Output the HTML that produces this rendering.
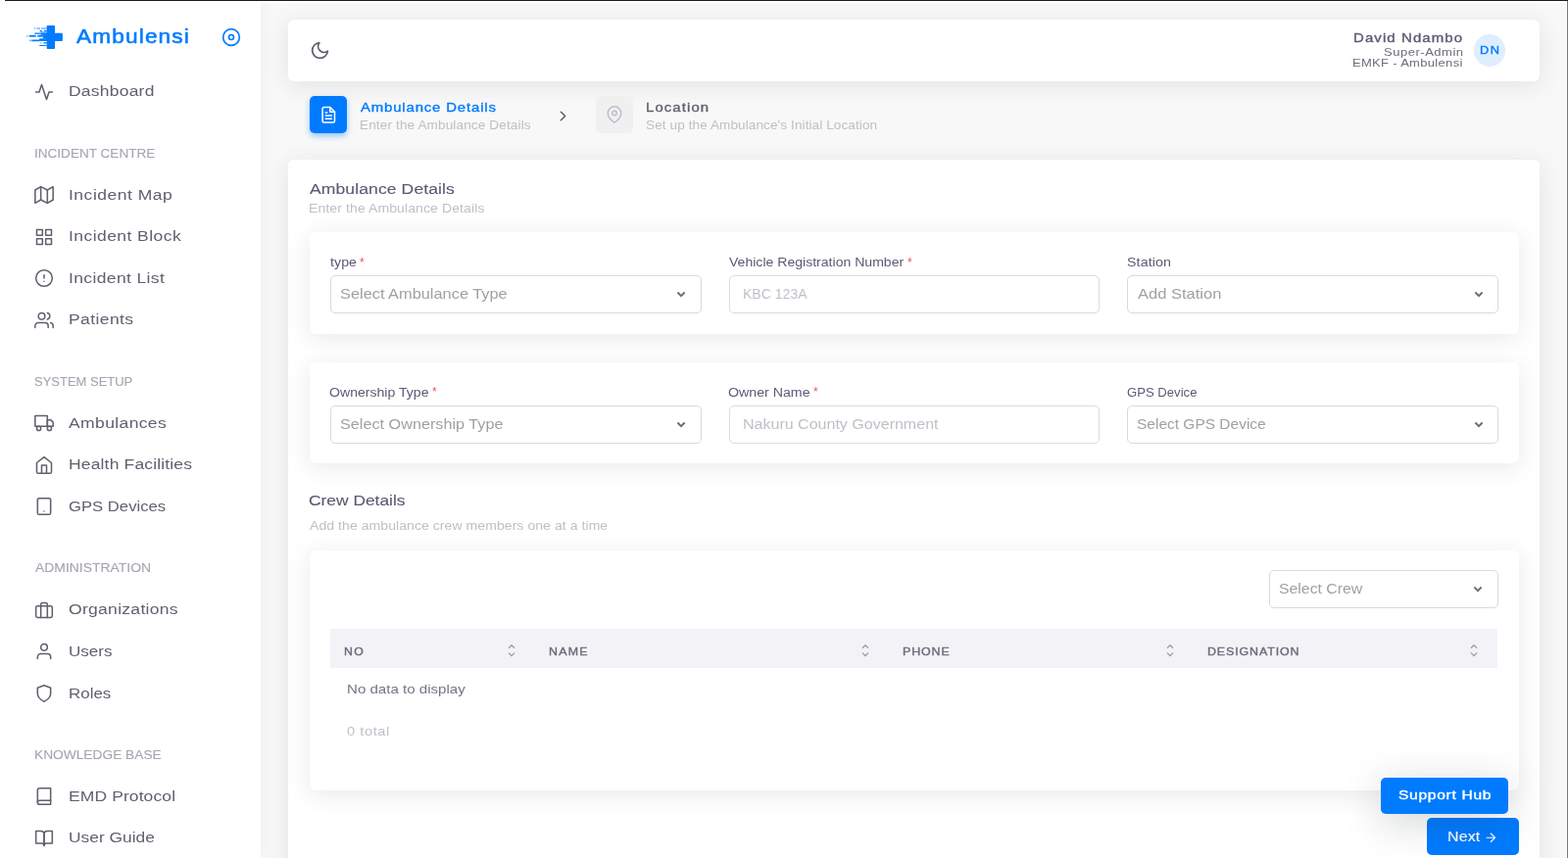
<!DOCTYPE html>
<html lang="en"><head><meta charset="utf-8"><title>Ambulensi - Add Ambulance</title>
<style>
html,body{margin:0;padding:0;background:#f8f8f8}
body{width:1600px;height:876px;overflow:hidden;background:#f8f8f8;position:relative;
 font-family:"Liberation Sans",sans-serif;}
aside,nav,header,main,section,.stepper-header{display:block;position:static;margin:0;padding:0}
.abs{position:absolute}
.t{position:absolute;white-space:nowrap;line-height:1;display:block;transform-origin:0 50%;will-change:transform}
.ic{position:absolute;display:block;overflow:visible}
</style></head>
<body>
<aside class="sidebar"><nav>
<div class="abs" style="left:0;top:0;width:266px;height:876px;background:#fff;box-shadow:0 0 15px 0 rgba(34,41,47,.05)"></div>
<svg class="ic" style="left:26px;top:25px" width="39" height="26" viewBox="26 25 39 26">
<g fill="#007bff">
<rect x="47.68" y="25.96" width="8.34" height="24.04" rx=".9"/>
<rect x="47" y="33.76" width="16.9" height="8.22" rx=".9"/>
<rect x="41.7" y="33.76" width="6.3" height="2.1"/>
<rect x="43.8" y="35.8" width="4.2" height="3.6"/>
<rect x="40.1" y="39.3" width="7.9" height="2.68"/>
<g opacity=".5"><rect x="34.94" y="28.22" width="1.23" height="1.64"/><rect x="37.41" y="28.22" width="3.5" height="1.64"/><rect x="41.93" y="28.22" width="5.8" height="1.64"/></g>
<rect x="40.49" y="30.89" width="2.46" height="1.23"/><rect x="45" y="30.89" width="2.7" height="1.23"/>
<rect x="41.3" y="32.33" width="6.4" height="1.5" opacity=".7"/>
<rect x="35.15" y="33.5" width="6.6" height="1.3" rx=".5"/>
<rect x="27.14" y="35.82" width="1.43" height="1.85" opacity=".5"/><rect x="29.81" y="35.82" width="6.98" height="1.85"/><rect x="38.23" y="35.82" width="5.6" height="1.85"/>
<rect x="30" y="40.54" width="2.7" height="1.65" opacity=".5"/><rect x="32.68" y="40.54" width="7.5" height="1.65"/>
<rect x="41.31" y="43" width="1.23" height="1.65" opacity=".5"/><rect x="44.39" y="43" width="3.3" height="1.65" opacity=".85"/>
<rect x="40.08" y="45.88" width="7.62" height="1.24" rx=".5"/>
</g></svg>
<span class="t" id="t1" style="left:78.32px;top:27.66px;font-size:19.90px;color:#007bff;letter-spacing:0.985px;transform:scaleX(1.1400);-webkit-text-stroke:0.52px #007bff;">Ambulensi</span>
<svg class="ic" style="left:226.10px;top:27.75px;" width="20.00" height="20.00" viewBox="0 0 24 24" fill="none" stroke="#007bff" stroke-width="2" stroke-linecap="round" stroke-linejoin="round"><circle cx="12" cy="12" r="10"/><circle cx="12" cy="12" r="3"/></svg>
<svg class="ic" style="left:34.85px;top:83.70px;" width="20.00" height="20.00" viewBox="0 0 24 24" fill="none" stroke="#625f6e" stroke-width="1.85" stroke-linecap="round" stroke-linejoin="round"><polyline points="22 12 18 12 15 21 9 3 6 12 2 12"/></svg>
<span class="t" id="t2" style="left:70.14px;top:85.26px;font-size:15.40px;color:#625f6e;letter-spacing:0.193px;transform:scaleX(1.1371);">Dashboard</span>
<span class="t" id="t3" style="left:35.08px;top:150.63px;font-size:12.60px;color:#a6a4b0;transform:scaleX(1.0767);-webkit-text-stroke:0.10px #a6a4b0;">INCIDENT CENTRE</span>
<svg class="ic" style="left:34.85px;top:189.40px;" width="20.00" height="20.00" viewBox="0 0 24 24" fill="none" stroke="#625f6e" stroke-width="1.85" stroke-linecap="round" stroke-linejoin="round"><polygon points="1 6 1 22 8 18 16 22 23 18 23 2 16 6 8 2 1 6"/><line x1="8" y1="2" x2="8" y2="18"/><line x1="16" y1="6" x2="16" y2="22"/></svg>
<span class="t" id="t4" style="left:69.58px;top:190.96px;font-size:15.40px;color:#625f6e;letter-spacing:0.439px;transform:scaleX(1.1390);">Incident Map</span>
<svg class="ic" style="left:34.85px;top:231.90px;" width="20.00" height="20.00" viewBox="0 0 24 24" fill="none" stroke="#625f6e" stroke-width="1.85" stroke-linecap="round" stroke-linejoin="round"><rect x="3" y="3" width="7" height="7"/><rect x="14" y="3" width="7" height="7"/><rect x="14" y="14" width="7" height="7"/><rect x="3" y="14" width="7" height="7"/></svg>
<span class="t" id="t5" style="left:69.65px;top:233.46px;font-size:15.40px;color:#625f6e;letter-spacing:0.381px;transform:scaleX(1.1381);">Incident Block</span>
<svg class="ic" style="left:34.85px;top:274.40px;" width="20.00" height="20.00" viewBox="0 0 24 24" fill="none" stroke="#625f6e" stroke-width="1.85" stroke-linecap="round" stroke-linejoin="round"><circle cx="12" cy="12" r="10"/><line x1="12" y1="8" x2="12" y2="12"/><line x1="12" y1="16" x2="12.01" y2="16"/></svg>
<span class="t" id="t6" style="left:69.52px;top:275.96px;font-size:15.40px;color:#625f6e;letter-spacing:0.316px;transform:scaleX(1.1390);">Incident List</span>
<svg class="ic" style="left:34.85px;top:316.90px;" width="20.00" height="20.00" viewBox="0 0 24 24" fill="none" stroke="#625f6e" stroke-width="1.85" stroke-linecap="round" stroke-linejoin="round"><path d="M17 21v-2a4 4 0 0 0-4-4H5a4 4 0 0 0-4 4v2"/><circle cx="9" cy="7" r="4"/><path d="M23 21v-2a4 4 0 0 0-3-3.87"/><path d="M16 3.13a4 4 0 0 1 0 7.75"/></svg>
<span class="t" id="t7" style="left:69.70px;top:318.46px;font-size:15.40px;color:#625f6e;letter-spacing:0.354px;transform:scaleX(1.1376);">Patients</span>
<span class="t" id="t8" style="left:34.86px;top:384.03px;font-size:12.60px;color:#a6a4b0;transform:scaleX(1.0308);-webkit-text-stroke:0.10px #a6a4b0;">SYSTEM SETUP</span>
<svg class="ic" style="left:34.85px;top:422.00px;" width="20.00" height="20.00" viewBox="0 0 24 24" fill="none" stroke="#625f6e" stroke-width="1.85" stroke-linecap="round" stroke-linejoin="round"><rect x="1" y="3" width="15" height="13"/><polygon points="16 8 20 8 23 11 23 16 16 16 16 8"/><circle cx="5.5" cy="18.5" r="2.5"/><circle cx="18.5" cy="18.5" r="2.5"/></svg>
<span class="t" id="t9" style="left:69.76px;top:423.56px;font-size:15.40px;color:#625f6e;letter-spacing:0.313px;transform:scaleX(1.1400);">Ambulances</span>
<svg class="ic" style="left:34.85px;top:464.50px;" width="20.00" height="20.00" viewBox="0 0 24 24" fill="none" stroke="#625f6e" stroke-width="1.85" stroke-linecap="round" stroke-linejoin="round"><path d="M3 9l9-7 9 7v11a2 2 0 0 1-2 2H5a2 2 0 0 1-2-2z"/><polyline points="9 22 9 12 15 12 15 22"/></svg>
<span class="t" id="t10" style="left:69.92px;top:466.06px;font-size:15.40px;color:#625f6e;letter-spacing:0.127px;transform:scaleX(1.1385);">Health Facilities</span>
<svg class="ic" style="left:34.85px;top:507.10px;" width="20.00" height="20.00" viewBox="0 0 24 24" fill="none" stroke="#625f6e" stroke-width="1.85" stroke-linecap="round" stroke-linejoin="round"><rect x="4" y="2" width="16" height="20" rx="2" ry="2"/><line x1="12" y1="18" x2="12.01" y2="18"/></svg>
<span class="t" id="t11" style="left:69.97px;top:508.66px;font-size:15.40px;color:#625f6e;transform:scaleX(1.0830);">GPS Devices</span>
<span class="t" id="t12" style="left:35.79px;top:573.53px;font-size:12.60px;color:#a6a4b0;transform:scaleX(1.1051);-webkit-text-stroke:0.10px #a6a4b0;">ADMINISTRATION</span>
<svg class="ic" style="left:34.85px;top:612.70px;" width="20.00" height="20.00" viewBox="0 0 24 24" fill="none" stroke="#625f6e" stroke-width="1.85" stroke-linecap="round" stroke-linejoin="round"><rect x="2" y="7" width="20" height="14" rx="2" ry="2"/><path d="M16 21V5a2 2 0 0 0-2-2h-4a2 2 0 0 0-2 2v16"/></svg>
<span class="t" id="t13" style="left:69.83px;top:614.26px;font-size:15.40px;color:#625f6e;letter-spacing:0.242px;transform:scaleX(1.1400);">Organizations</span>
<svg class="ic" style="left:34.85px;top:655.40px;" width="20.00" height="20.00" viewBox="0 0 24 24" fill="none" stroke="#625f6e" stroke-width="1.85" stroke-linecap="round" stroke-linejoin="round"><path d="M20 21v-2a4 4 0 0 0-4-4H8a4 4 0 0 0-4 4v2"/><circle cx="12" cy="7" r="4"/></svg>
<span class="t" id="t14" style="left:70.23px;top:656.96px;font-size:15.40px;color:#625f6e;transform:scaleX(1.1083);">Users</span>
<svg class="ic" style="left:34.85px;top:698.00px;" width="20.00" height="20.00" viewBox="0 0 24 24" fill="none" stroke="#625f6e" stroke-width="1.85" stroke-linecap="round" stroke-linejoin="round"><path d="M12 22s8-4 8-10V5l-8-3-8 3v7c0 6 8 10 8 10z"/></svg>
<span class="t" id="t15" style="left:69.58px;top:699.56px;font-size:15.40px;color:#625f6e;transform:scaleX(1.1012);">Roles</span>
<span class="t" id="t16" style="left:34.67px;top:765.20px;font-size:12.60px;color:#a6a4b0;transform:scaleX(1.0908);-webkit-text-stroke:0.10px #a6a4b0;">KNOWLEDGE BASE</span>
<svg class="ic" style="left:34.85px;top:803.20px;" width="20.00" height="20.00" viewBox="0 0 24 24" fill="none" stroke="#625f6e" stroke-width="1.85" stroke-linecap="round" stroke-linejoin="round"><path d="M4 19.5A2.5 2.5 0 0 1 6.5 17H20"/><path d="M6.5 2H20v20H6.5A2.5 2.5 0 0 1 4 19.5v-15A2.5 2.5 0 0 1 6.5 2z"/></svg>
<span class="t" id="t17" style="left:70.01px;top:804.76px;font-size:15.40px;color:#625f6e;letter-spacing:0.071px;transform:scaleX(1.1390);">EMD Protocol</span>
<svg class="ic" style="left:34.85px;top:845.50px;" width="20.00" height="20.00" viewBox="0 0 24 24" fill="none" stroke="#625f6e" stroke-width="1.85" stroke-linecap="round" stroke-linejoin="round"><path d="M2 3h6a4 4 0 0 1 4 4v14a3 3 0 0 0-3-3H2z"/><path d="M22 3h-6a4 4 0 0 0-4 4v14a3 3 0 0 1 3-3h7z"/></svg>
<span class="t" id="t18" style="left:70.41px;top:847.06px;font-size:15.40px;color:#625f6e;transform:scaleX(1.1283);">User Guide</span>
</nav></aside>
<header class="navbar">
<div class="abs" style="left:294px;top:20px;width:1277.3px;height:63px;background:#fff;border-radius:6px;box-shadow:0 4px 24px 0 rgba(34,41,47,.1);"></div>
<svg class="ic" style="left:316.05px;top:40.60px;" width="21.00" height="21.00" viewBox="0 0 24 24" fill="none" stroke="#625f6e" stroke-width="2" stroke-linecap="round" stroke-linejoin="round"><path d="M21 12.79A9 9 0 1 1 11.21 3 7 7 0 0 0 21 12.79z"/></svg>
<span class="t" id="t19" style="left:1380.96px;top:32.41px;font-size:13.10px;color:#5e5873;letter-spacing:0.980px;transform:scaleX(1.1400);-webkit-text-stroke:0.36px #5e5873;">David Ndambo</span>
<span class="t" id="t20" style="left:1411.66px;top:48.05px;font-size:11.40px;color:#6e6b7b;letter-spacing:0.471px;transform:scaleX(1.1388);">Super-Admin</span>
<span class="t" id="t21" style="left:1380.00px;top:59.05px;font-size:11.40px;color:#6e6b7b;letter-spacing:0.281px;transform:scaleX(1.1400);">EMKF - Ambulensi</span>
<div class="abs" style="left:1504px;top:35.4px;width:32.2px;height:32.2px;border-radius:50%;background:#dfeeff"></div>
<span class="t" id="t22" style="left:1509.67px;top:45.57px;font-size:11.50px;color:#007bff;letter-spacing:1.435px;transform:scaleX(1.1142);-webkit-text-stroke:0.36px #007bff;">DN</span>
</header>
<div class="stepper-header">
<div class="abs" style="left:316px;top:98px;width:38px;height:38px;border-radius:5px;background:#007bff;box-shadow:0 3px 6px 0 rgba(0,123,255,.4)"></div>
<svg class="ic" style="left:325.70px;top:107.50px;" width="18.60" height="18.60" viewBox="0 0 24 24" fill="none" stroke="#fff" stroke-width="2" stroke-linecap="round" stroke-linejoin="round"><path d="M14 2H6a2 2 0 0 0-2 2v16a2 2 0 0 0 2 2h12a2 2 0 0 0 2-2V8z"/><polyline points="14 2 14 8 20 8"/><line x1="16" y1="13" x2="8" y2="13"/><line x1="16" y1="17" x2="8" y2="17"/><polyline points="10 9 9 9 8 9"/></svg>
<span class="t" id="t23" style="left:367.90px;top:102.71px;font-size:13.10px;color:#007bff;letter-spacing:0.738px;transform:scaleX(1.1400);-webkit-text-stroke:0.36px #007bff;">Ambulance Details</span>
<span class="t" id="t24" style="left:367.00px;top:122.61px;font-size:11.90px;color:#bfbfc8;letter-spacing:0.119px;transform:scaleX(1.1400);">Enter the Ambulance Details</span>
<svg class="ic" style="left:565.60px;top:109.70px;" width="17.00" height="17.00" viewBox="0 0 24 24" fill="none" stroke="#5a5766" stroke-width="2" stroke-linecap="round" stroke-linejoin="round"><polyline points="9 18 15 12 9 6"/></svg>
<div class="abs" style="left:608px;top:98px;width:38px;height:38px;border-radius:5px;background:#f0f0f1"></div>
<svg class="ic" style="left:618.10px;top:107.75px;" width="18.00" height="18.00" viewBox="0 0 24 24" fill="none" stroke="#babfc7" stroke-width="2" stroke-linecap="round" stroke-linejoin="round"><path d="M21 10c0 7-9 13-9 13s-9-6-9-13a9 9 0 0 1 18 0z"/><circle cx="12" cy="10" r="3"/></svg>
<span class="t" id="t25" style="left:658.76px;top:102.71px;font-size:13.10px;color:#625f6e;letter-spacing:0.965px;transform:scaleX(1.1386);-webkit-text-stroke:0.36px #625f6e;">Location</span>
<span class="t" id="t26" style="left:659.40px;top:122.61px;font-size:11.90px;color:#bfbfc8;letter-spacing:0.086px;transform:scaleX(1.1400);">Set up the Ambulance's Initial Location</span>
</div>
<main class="stepper-content">
<div class="abs" style="left:294px;top:163px;width:1277px;height:760px;background:#fff;border-radius:6px;box-shadow:0 4px 24px 0 rgba(34,41,47,.1);"></div>
<span class="t" id="t27" style="left:315.78px;top:185.36px;font-size:15.40px;color:#5e5873;letter-spacing:0.088px;transform:scaleX(1.1396);-webkit-text-stroke:0.12px #5e5873;">Ambulance Details</span>
<span class="t" id="t28" style="left:315.34px;top:206.89px;font-size:12.30px;color:#bfbfc8;letter-spacing:0.086px;transform:scaleX(1.1400);">Enter the Ambulance Details</span>
<section class="card vehicle">
<div class="abs" style="left:316px;top:237.0px;width:1234px;height:104.0px;background:#fff;border-radius:6px;box-shadow:0 4px 24px 0 rgba(34,41,47,.1);"></div>
<span class="t" id="t29" style="left:336.94px;top:261.72px;font-size:12.50px;color:#5e5873;letter-spacing:0.057px;transform:scaleX(1.1348);">type</span>
<span class="t req" id="t30" style="left:367.20px;top:261.54px;font-size:12.00px;color:#ea5455;">*</span>
<span class="t" id="t31" style="left:743.56px;top:261.72px;font-size:12.50px;color:#5e5873;transform:scaleX(1.1249);">Vehicle Registration Number</span>
<span class="t req" id="t32" style="left:925.50px;top:261.54px;font-size:12.00px;color:#ea5455;">*</span>
<span class="t" id="t33" style="left:1149.78px;top:261.72px;font-size:12.50px;color:#5e5873;letter-spacing:0.109px;transform:scaleX(1.1370);">Station</span>
<div class="abs" style="left:337.0px;top:281.0px;width:378.6px;height:39.0px;box-sizing:border-box;border:1px solid #dadada;border-radius:5px;background:#fff"></div>
<span class="t" id="t34" style="left:346.76px;top:292.67px;font-size:14.80px;color:#a1a1a1;transform:scaleX(1.1059);">Select Ambulance Type</span>
<svg class="ic" style="left:689.20px;top:295.70px" width="12" height="9" viewBox="-6 -4.5 12 9" fill="none" stroke="#6c6c6c" stroke-width="1.9" stroke-linejoin="miter"><polyline points="-3.6,-2 0,1.7 3.6,-2"/></svg>
<div class="abs" style="left:743.8px;top:281.0px;width:378.6px;height:39.0px;box-sizing:border-box;border:1px solid #dcdbe1;border-radius:5px;background:#fff"></div>
<span class="t" id="t35" style="left:757.94px;top:292.67px;font-size:14.80px;color:#bfbfc8;transform:scaleX(0.9490);">KBC 123A</span>
<div class="abs" style="left:1150.4px;top:281.0px;width:378.6px;height:39.0px;box-sizing:border-box;border:1px solid #dadada;border-radius:5px;background:#fff"></div>
<span class="t" id="t36" style="left:1161.16px;top:292.67px;font-size:14.80px;color:#a1a1a1;transform:scaleX(1.1155);">Add Station</span>
<svg class="ic" style="left:1502.60px;top:295.70px" width="12" height="9" viewBox="-6 -4.5 12 9" fill="none" stroke="#6c6c6c" stroke-width="1.9" stroke-linejoin="miter"><polyline points="-3.6,-2 0,1.7 3.6,-2"/></svg>
</section>
<section class="card ownership">
<div class="abs" style="left:316px;top:369.6px;width:1234px;height:103.7px;background:#fff;border-radius:6px;box-shadow:0 4px 24px 0 rgba(34,41,47,.1);"></div>
<span class="t" id="t37" style="left:336.26px;top:394.95px;font-size:12.50px;color:#5e5873;transform:scaleX(1.1269);">Ownership Type</span>
<span class="t req" id="t38" style="left:441.10px;top:394.14px;font-size:12.00px;color:#ea5455;">*</span>
<span class="t" id="t39" style="left:743.18px;top:394.95px;font-size:12.50px;color:#5e5873;transform:scaleX(1.1343);">Owner Name</span>
<span class="t req" id="t40" style="left:829.90px;top:394.14px;font-size:12.00px;color:#ea5455;">*</span>
<span class="t" id="t41" style="left:1150.27px;top:394.95px;font-size:12.50px;color:#5e5873;transform:scaleX(1.0493);">GPS Device</span>
<div class="abs" style="left:337.0px;top:414.0px;width:378.6px;height:39.0px;box-sizing:border-box;border:1px solid #dadada;border-radius:5px;background:#fff"></div>
<span class="t" id="t42" style="left:346.94px;top:425.67px;font-size:14.80px;color:#a1a1a1;transform:scaleX(1.0957);">Select Ownership Type</span>
<svg class="ic" style="left:689.20px;top:428.70px" width="12" height="9" viewBox="-6 -4.5 12 9" fill="none" stroke="#6c6c6c" stroke-width="1.9" stroke-linejoin="miter"><polyline points="-3.6,-2 0,1.7 3.6,-2"/></svg>
<div class="abs" style="left:743.8px;top:414.0px;width:378.6px;height:39.0px;box-sizing:border-box;border:1px solid #dcdbe1;border-radius:5px;background:#fff"></div>
<span class="t" id="t43" style="left:758.01px;top:425.67px;font-size:14.80px;color:#bfbfc8;transform:scaleX(1.0829);">Nakuru County Government</span>
<div class="abs" style="left:1150.4px;top:414.0px;width:378.6px;height:39.0px;box-sizing:border-box;border:1px solid #dadada;border-radius:5px;background:#fff"></div>
<span class="t" id="t44" style="left:1160.21px;top:425.67px;font-size:14.80px;color:#a1a1a1;transform:scaleX(1.0468);">Select GPS Device</span>
<svg class="ic" style="left:1502.60px;top:428.70px" width="12" height="9" viewBox="-6 -4.5 12 9" fill="none" stroke="#6c6c6c" stroke-width="1.9" stroke-linejoin="miter"><polyline points="-3.6,-2 0,1.7 3.6,-2"/></svg>
</section>
<span class="t" id="t45" style="left:315.23px;top:502.86px;font-size:15.40px;color:#5e5873;transform:scaleX(1.1294);-webkit-text-stroke:0.12px #5e5873;">Crew Details</span>
<span class="t" id="t46" style="left:315.89px;top:530.99px;font-size:12.30px;color:#bfbfc8;letter-spacing:0.054px;transform:scaleX(1.1399);">Add the ambulance crew members one at a time</span>
<section class="card crew">
<div class="abs" style="left:316px;top:561.6px;width:1234px;height:245.0px;background:#fff;border-radius:6px;box-shadow:0 4px 24px 0 rgba(34,41,47,.1);"></div>
<div class="abs" style="left:1295.3px;top:582.0px;width:233.4px;height:39.0px;box-sizing:border-box;border:1px solid #dadada;border-radius:5px;background:#fff"></div>
<span class="t" id="t47" style="left:1304.75px;top:593.83px;font-size:14.80px;color:#a1a1a1;transform:scaleX(1.0690);">Select Crew</span>
<svg class="ic" style="left:1502.30px;top:596.70px" width="12" height="9" viewBox="-6 -4.5 12 9" fill="none" stroke="#6c6c6c" stroke-width="1.9" stroke-linejoin="miter"><polyline points="-3.6,-2 0,1.7 3.6,-2"/></svg>
<div class="abs" style="left:336.6px;top:642px;width:1191.8px;height:40px;background:#f3f2f7"></div>
<span class="t" id="t48" style="left:350.51px;top:659.77px;font-size:10.90px;color:#6e6b7b;letter-spacing:1.207px;transform:scaleX(1.1284);-webkit-text-stroke:0.36px #6e6b7b;">NO</span>
<svg class="ic" style="left:517.30px;top:655.5px" width="10" height="16" viewBox="0 0 10 16" fill="none" stroke="#9896a2" stroke-width="1.25" stroke-linecap="round" stroke-linejoin="round"><polyline points="2.3,5.4 5,2.7 7.7,5.4"/><polyline points="2.3,10.9 5,13.6 7.7,10.9"/></svg>
<span class="t" id="t49" style="left:560.37px;top:659.77px;font-size:10.90px;color:#6e6b7b;letter-spacing:1.067px;transform:scaleX(1.1379);-webkit-text-stroke:0.36px #6e6b7b;">NAME</span>
<svg class="ic" style="left:878.30px;top:655.5px" width="10" height="16" viewBox="0 0 10 16" fill="none" stroke="#9896a2" stroke-width="1.25" stroke-linecap="round" stroke-linejoin="round"><polyline points="2.3,5.4 5,2.7 7.7,5.4"/><polyline points="2.3,10.9 5,13.6 7.7,10.9"/></svg>
<span class="t" id="t50" style="left:921.39px;top:659.77px;font-size:10.90px;color:#6e6b7b;letter-spacing:0.776px;transform:scaleX(1.1400);-webkit-text-stroke:0.36px #6e6b7b;">PHONE</span>
<svg class="ic" style="left:1188.70px;top:655.5px" width="10" height="16" viewBox="0 0 10 16" fill="none" stroke="#9896a2" stroke-width="1.25" stroke-linecap="round" stroke-linejoin="round"><polyline points="2.3,5.4 5,2.7 7.7,5.4"/><polyline points="2.3,10.9 5,13.6 7.7,10.9"/></svg>
<span class="t" id="t51" style="left:1231.79px;top:659.77px;font-size:10.90px;color:#6e6b7b;letter-spacing:0.777px;transform:scaleX(1.1400);-webkit-text-stroke:0.36px #6e6b7b;">DESIGNATION</span>
<svg class="ic" style="left:1499.20px;top:655.5px" width="10" height="16" viewBox="0 0 10 16" fill="none" stroke="#9896a2" stroke-width="1.25" stroke-linecap="round" stroke-linejoin="round"><polyline points="2.3,5.4 5,2.7 7.7,5.4"/><polyline points="2.3,10.9 5,13.6 7.7,10.9"/></svg>
<span class="t" id="t52" style="left:353.86px;top:696.76px;font-size:13.50px;color:#777483;transform:scaleX(1.1175);">No data to display</span>
<span class="t" id="t53" style="left:353.66px;top:740.20px;font-size:13.00px;color:#bfbfc8;letter-spacing:0.494px;transform:scaleX(1.1280);">0 total</span>
</section>
<div class="abs" style="left:1455.8px;top:835.3px;width:94.3px;height:37.9px;border-radius:5px;background:#007bff"></div>
<span class="t" id="t54" style="left:1477.14px;top:847.05px;font-size:14.00px;color:#fff;letter-spacing:0.146px;transform:scaleX(1.1363);-webkit-text-stroke:0.11px #fff;">Next</span>
<svg class="ic" style="left:1513.95px;top:847.50px;" width="14.50" height="14.50" viewBox="0 0 24 24" fill="none" stroke="#fff" stroke-width="1.9" stroke-linecap="round" stroke-linejoin="round"><line x1="5" y1="12" x2="19" y2="12"/><polyline points="12 5 19 12 12 19"/></svg>
<div class="abs" style="left:1409.3px;top:794px;width:129.8px;height:37px;border-radius:5px;background:#007bff;box-shadow:0 8px 40px rgba(34,41,47,.21)"></div>
<span class="t" id="t55" style="left:1427.10px;top:805.40px;font-size:13.70px;color:#fff;letter-spacing:0.620px;transform:scaleX(1.1381);-webkit-text-stroke:0.36px #fff;">Support Hub</span>
</main>
<div class="abs" style="left:0;top:1px;width:1600px;height:2px;background:#fff"></div>
<div class="abs" style="left:5px;top:0;width:1595px;height:1px;background:#1a1b1a"></div>
<div class="abs" style="left:1598px;top:1px;width:1px;height:875px;background:#fff"></div>
<div class="abs" style="left:1599px;top:1px;width:1px;height:875px;background:#787878"></div>
</body></html>
